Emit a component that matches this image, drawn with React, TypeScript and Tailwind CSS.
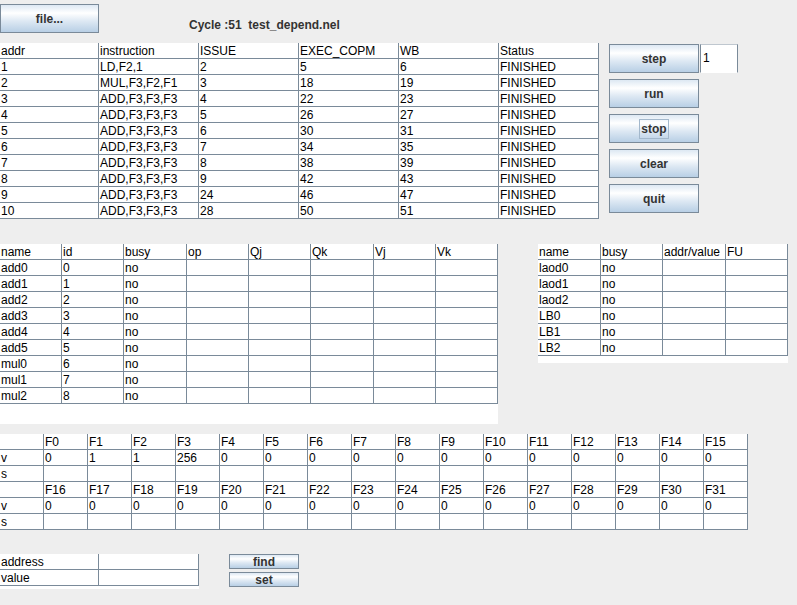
import React from "react";

type TableProps = {
  widths: number[];
  rows: string[][];
  className?: string;
};

const Table = ({ widths, rows, className = "" }: TableProps) => {
  return (
    <div className={"bg-white " + className}>
      {rows.map((row, r) => (
        <div key={r} className="flex">
          {row.map((cell, c) => (
            <div
              key={c}
              style={{ width: widths[c] }}
              className="h-[16px] shrink-0 border-r border-b border-[#7a8a99] pl-[1px] leading-[17px] text-black whitespace-pre overflow-hidden"
            >
              {cell}
            </div>
          ))}
        </div>
      ))}
    </div>
  );
};

const Btn = ({
  children,
  className = "",
}: {
  children: React.ReactNode;
  className?: string;
}) => (
  <button
    className={
      "flex items-center justify-center border border-[#7a8a99] bg-[linear-gradient(#dde8f3_0%,#ffffff_30%,#dde8f3_60%,#b8cfe5_100%)] font-bold text-[#333333] text-[12px] leading-none " +
      className
    }
  >
    {children}
  </button>
);

const instrs = [
  ["1", "LD,F2,1", "2", "5", "6"],
  ["2", "MUL,F3,F2,F1", "3", "18", "19"],
  ["3", "ADD,F3,F3,F3", "4", "22", "23"],
  ["4", "ADD,F3,F3,F3", "5", "26", "27"],
  ["5", "ADD,F3,F3,F3", "6", "30", "31"],
  ["6", "ADD,F3,F3,F3", "7", "34", "35"],
  ["7", "ADD,F3,F3,F3", "8", "38", "39"],
  ["8", "ADD,F3,F3,F3", "9", "42", "43"],
  ["9", "ADD,F3,F3,F3", "24", "46", "47"],
  ["10", "ADD,F3,F3,F3", "28", "50", "51"],
];

const instrRows = [
  ["addr", "instruction", "ISSUE", "EXEC_COPM", "WB", "Status"],
  ...instrs.map((r) => [...r, "FINISHED"]),
];

const rsNames = ["add0", "add1", "add2", "add3", "add4", "add5", "mul0", "mul1", "mul2"];
const rsRows = [
  ["name", "id", "busy", "op", "Qj", "Qk", "Vj", "Vk"],
  ...rsNames.map((n, i) => [n, String(i), "no", "", "", "", "", ""]),
];

const lbRows = [
  ["name", "busy", "addr/value", "FU"],
  ...["laod0", "laod1", "laod2", "LB0", "LB1", "LB2"].map((n) => [n, "no", "", ""]),
];

const regVals = ["0", "1", "1", "256", ...Array(12).fill("0")];
const regRows = [
  ["", ...Array.from({ length: 16 }, (_, i) => "F" + i)],
  ["v", ...regVals],
  ["s", ...Array(16).fill("")],
  ["", ...Array.from({ length: 16 }, (_, i) => "F" + (i + 16))],
  ["v", ...Array(16).fill("0")],
  ["s", ...Array(16).fill("")],
];

const memRows = [
  ["address", ""],
  ["value", ""],
];

export default function App() {
  return (
    <div className="w-[797px] h-[605px] overflow-hidden bg-[#eeeeee] font-['Liberation_Sans',Arial,sans-serif] text-[12px]">
      <div className="flex items-start pt-[4px]">
        <Btn className="w-[99px] h-[29px]">file...</Btn>
        <span className="ml-[90px] mt-[13px] leading-[16px] font-bold text-[#333333] whitespace-pre">
          Cycle :51  test_depend.nel
        </span>
      </div>

      <div className="flex items-start mt-[10px]">
        <Table widths={[99, 100, 100, 100, 100, 100]} rows={instrRows} />
        <div className="ml-[10px] mt-[1px] flex flex-col gap-[6px]">
          <div className="flex">
            <Btn className="w-[90px] h-[29px]">step</Btn>
            <div className="ml-[1px] w-[38px] h-[29px] bg-white border-t border-r border-l border-t-[#bfc7cf] border-r-[#7a8a99] border-l-[#7a8a99] border-b border-b-white pl-[2px] leading-[27px] text-black">
              1
            </div>
          </div>
          <Btn className="w-[90px] h-[29px]">run</Btn>
          <Btn className="w-[90px] h-[29px]">
            <span className="border border-[#a3b8cc] px-[1px] py-[3px]">stop</span>
          </Btn>
          <Btn className="w-[90px] h-[29px]">clear</Btn>
          <Btn className="w-[90px] h-[29px]">quit</Btn>
        </div>
      </div>

      <div className="flex items-start mt-[25px]">
        <Table widths={[62, 62, 63, 62, 62, 63, 62, 62]} rows={rsRows} className="h-[180px]" />
        <Table widths={[63, 62, 63, 62]} rows={lbRows} className="ml-[40px] h-[119px]" />
      </div>

      <Table widths={Array(17).fill(44)} rows={regRows} className="mt-[10px] w-[748px]" />

      <div className="flex items-start mt-[24px]">
        <Table widths={[99, 100]} rows={memRows} className="h-[35px]" />
        <div className="ml-[30px] flex flex-col gap-[3px]">
          <Btn className="w-[70px] h-[15px]">find</Btn>
          <Btn className="w-[70px] h-[15px]">set</Btn>
        </div>
      </div>
    </div>
  );
}
